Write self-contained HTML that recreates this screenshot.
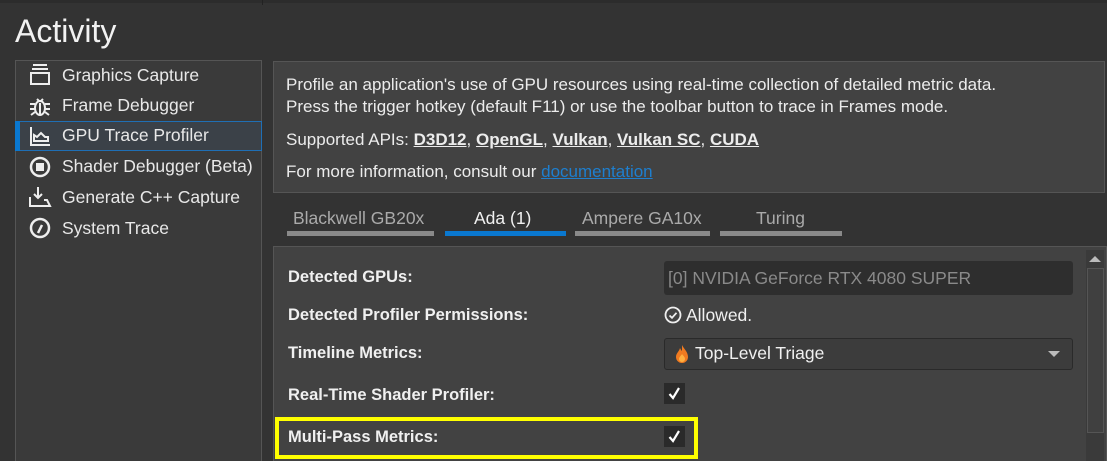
<!DOCTYPE html>
<html><head><style>
*{margin:0;padding:0;box-sizing:border-box}
html,body{width:1107px;height:461px;overflow:hidden}
body{background:#333;font-family:"Liberation Sans",sans-serif;color:#e6e6e6;position:relative}
.a{position:absolute;white-space:nowrap}
.item{position:absolute;left:62px;font-size:17.5px;color:#e8e8e8}
.ic{position:absolute;left:28px}
.info{font-size:17px;color:#ececec}
.lbl{position:absolute;left:288px;font-size:16.5px;font-weight:bold;color:#f0f0f0}
.tab{position:absolute;top:208px;font-size:17.5px;color:#aaa}
.ul{position:absolute;top:231px;height:5px;background:#8a8a8a}
.cb{position:absolute;left:664px;width:21px;height:21px;background:#2a2a2a}
</style></head><body>
<div class="a" style="left:0;top:0;width:1107px;height:3px;background:#2c2c2c"></div>
<div class="a" style="left:262px;top:0;width:1px;height:5px;background:#222"></div>
<div class="a" style="left:15px;top:13px;font-size:32px;color:#f2f2f2">Activity</div>

<div class="a" style="left:15px;top:60px;width:247px;height:410px;background:#3a3a3a;border:1px solid #555"></div>
<div class="a" style="left:15px;top:121px;width:247px;height:30px;background:#3b4148;border:1px solid #1f6fb5"></div>
<div class="a" style="left:15px;top:121px;width:5px;height:30px;background:#0a78d0"></div>

<svg class="ic" style="top:63px" width="24" height="24" viewBox="0 0 24 24" fill="none" stroke="#eee" stroke-width="2"><path d="M5 2h14M4 6h16"/><rect x="3" y="10" width="18" height="11"/></svg>
<svg class="ic" style="top:94px" width="24" height="24" viewBox="0 0 24 24" fill="none" stroke="#eee" stroke-width="2"><ellipse cx="12" cy="14" rx="5" ry="7"/><path d="M9 5l2 2M15 5l-2 2M2 10h5M17 10h5M2 15h5M17 15h5M3 21l4-3M21 21l-4-3M12 9v12"/></svg>
<svg class="ic" style="top:124px" width="24" height="24" viewBox="0 0 24 24" fill="none" stroke="#eee" stroke-width="2"><path d="M3 3v18h19M6 17v-6l3 2 4-4 4 4 3 0v4z"/></svg>
<svg class="ic" style="top:155px" width="24" height="24" viewBox="0 0 24 24"><circle cx="12" cy="12" r="9" fill="none" stroke="#eee" stroke-width="2.5"/><rect x="8" y="8" width="8" height="8" fill="#eee"/></svg>
<svg class="ic" style="top:185px" width="24" height="24" viewBox="0 0 24 24" fill="none" stroke="#eee" stroke-width="2"><path d="M10 2v11M6 9l4 4 4-4M2 12v9h20l-3-6h-3"/></svg>
<svg class="ic" style="top:216px" width="24" height="24" viewBox="0 0 24 24" fill="none" stroke="#eee" stroke-width="2.5"><circle cx="12" cy="12" r="9"/><path d="M10 17l4-8"/></svg>

<div class="item" style="top:65px">Graphics Capture</div>
<div class="item" style="top:95px">Frame Debugger</div>
<div class="item" style="top:125px">GPU Trace Profiler</div>
<div class="item" style="top:156px">Shader Debugger (Beta)</div>
<div class="item" style="top:187px">Generate C++ Capture</div>
<div class="item" style="top:218px">System Trace</div>

<div class="a" style="left:273px;top:61px;width:832px;height:132px;background:#424242;border:1px solid #555"></div>
<div class="a info" style="left:286px;top:75px">Profile an application's use of GPU resources using real-time collection of detailed metric data.</div>
<div class="a info" style="left:286px;top:97px">Press the trigger hotkey (default F11) or use the toolbar button to trace in Frames mode.</div>
<div class="a info" style="left:286px;top:130px">Supported APIs: <b><u>D3D12</u></b>, <b><u>OpenGL</u></b>, <b><u>Vulkan</u></b>, <b><u>Vulkan SC</u></b>, <b><u>CUDA</u></b></div>
<div class="a info" style="left:286px;top:162px">For more information, consult our <u style="color:#1e7fcf">documentation</u></div>

<div class="tab" style="left:293px">Blackwell GB20x</div>
<div class="tab" style="left:474px;color:#f0f0f0">Ada (1)</div>
<div class="tab" style="left:582px">Ampere GA10x</div>
<div class="tab" style="left:756px">Turing</div>
<div class="ul" style="left:287px;width:147px"></div>
<div class="ul" style="left:445px;width:121px;background:#0a78d0"></div>
<div class="ul" style="left:575px;width:135px"></div>
<div class="ul" style="left:720px;width:122px"></div>

<div class="a" style="left:273px;top:246px;width:834px;height:220px;background:#424242;border:1px solid #555"></div>
<div class="a" style="left:1086px;top:250px;width:18px;height:211px;background:#3a3a3a"></div>
<div class="a" style="left:1087px;top:268px;width:17px;height:165px;border:1px solid #555;background:#404040"></div>
<div class="a" style="left:1089px;top:256px;width:0;height:0;border-left:6px solid transparent;border-right:6px solid transparent;border-bottom:6px solid #bbb"></div>

<div class="lbl" style="top:268px">Detected GPUs:</div>
<div class="lbl" style="top:306px">Detected Profiler Permissions:</div>
<div class="lbl" style="top:344px">Timeline Metrics:</div>
<div class="lbl" style="top:386px">Real-Time Shader Profiler:</div>
<div class="lbl" style="top:428px">Multi-Pass Metrics:</div>

<div class="a" style="left:664px;top:261px;width:409px;height:34px;background:#2e2e2e;border-radius:3px;color:#8a8a8a;font-size:17.5px;padding:7px 4px">[0] NVIDIA GeForce RTX 4080 SUPER</div>
<svg class="a" style="left:664px;top:306px" width="18" height="18" viewBox="0 0 18 18" fill="none" stroke="#eee" stroke-width="1.8"><circle cx="9" cy="9" r="7.5"/><path d="M5.5 9.5l2.5 2.3 4.5-5"/></svg>
<div class="a" style="left:686px;top:305px;font-size:17.5px;color:#f0f0f0">Allowed.</div>
<div class="a" style="left:664px;top:338px;width:409px;height:32px;background:#3c3c3c;border:1px solid #2a2a2a;border-radius:3px"></div>
<svg class="a" style="left:675px;top:344px" width="14" height="20" viewBox="0 0 14 20"><path d="M7 1C9 5 13 8 13 13a6 6 0 0 1-12 0C1 9 4 8 5 4c1 2 2 3 2 3z" fill="#f07a20"/><path d="M7 10c1.5 2 3 3 3 5a3 3 0 0 1-6 0c0-2 2-3 3-5z" fill="#ffb040"/></svg>
<div class="a" style="left:695px;top:343px;font-size:17.5px;color:#f0f0f0">Top-Level Triage</div>
<div class="a" style="left:1048px;top:351px;width:0;height:0;border-left:6px solid transparent;border-right:6px solid transparent;border-top:6px solid #bbb"></div>
<div class="cb" style="top:383px"><svg width="21" height="21" viewBox="0 0 21 21" fill="none" stroke="#fff" stroke-width="2.2"><path d="M5.5 11l3.5 4 6-10"/></svg></div>
<div class="cb" style="top:426px"><svg width="21" height="21" viewBox="0 0 21 21" fill="none" stroke="#fff" stroke-width="2.2"><path d="M5.5 11l3.5 4 6-10"/></svg></div>
<div class="a" style="left:275px;top:417px;width:423px;height:42px;border:4px solid #ffff00"></div>
</body></html>
